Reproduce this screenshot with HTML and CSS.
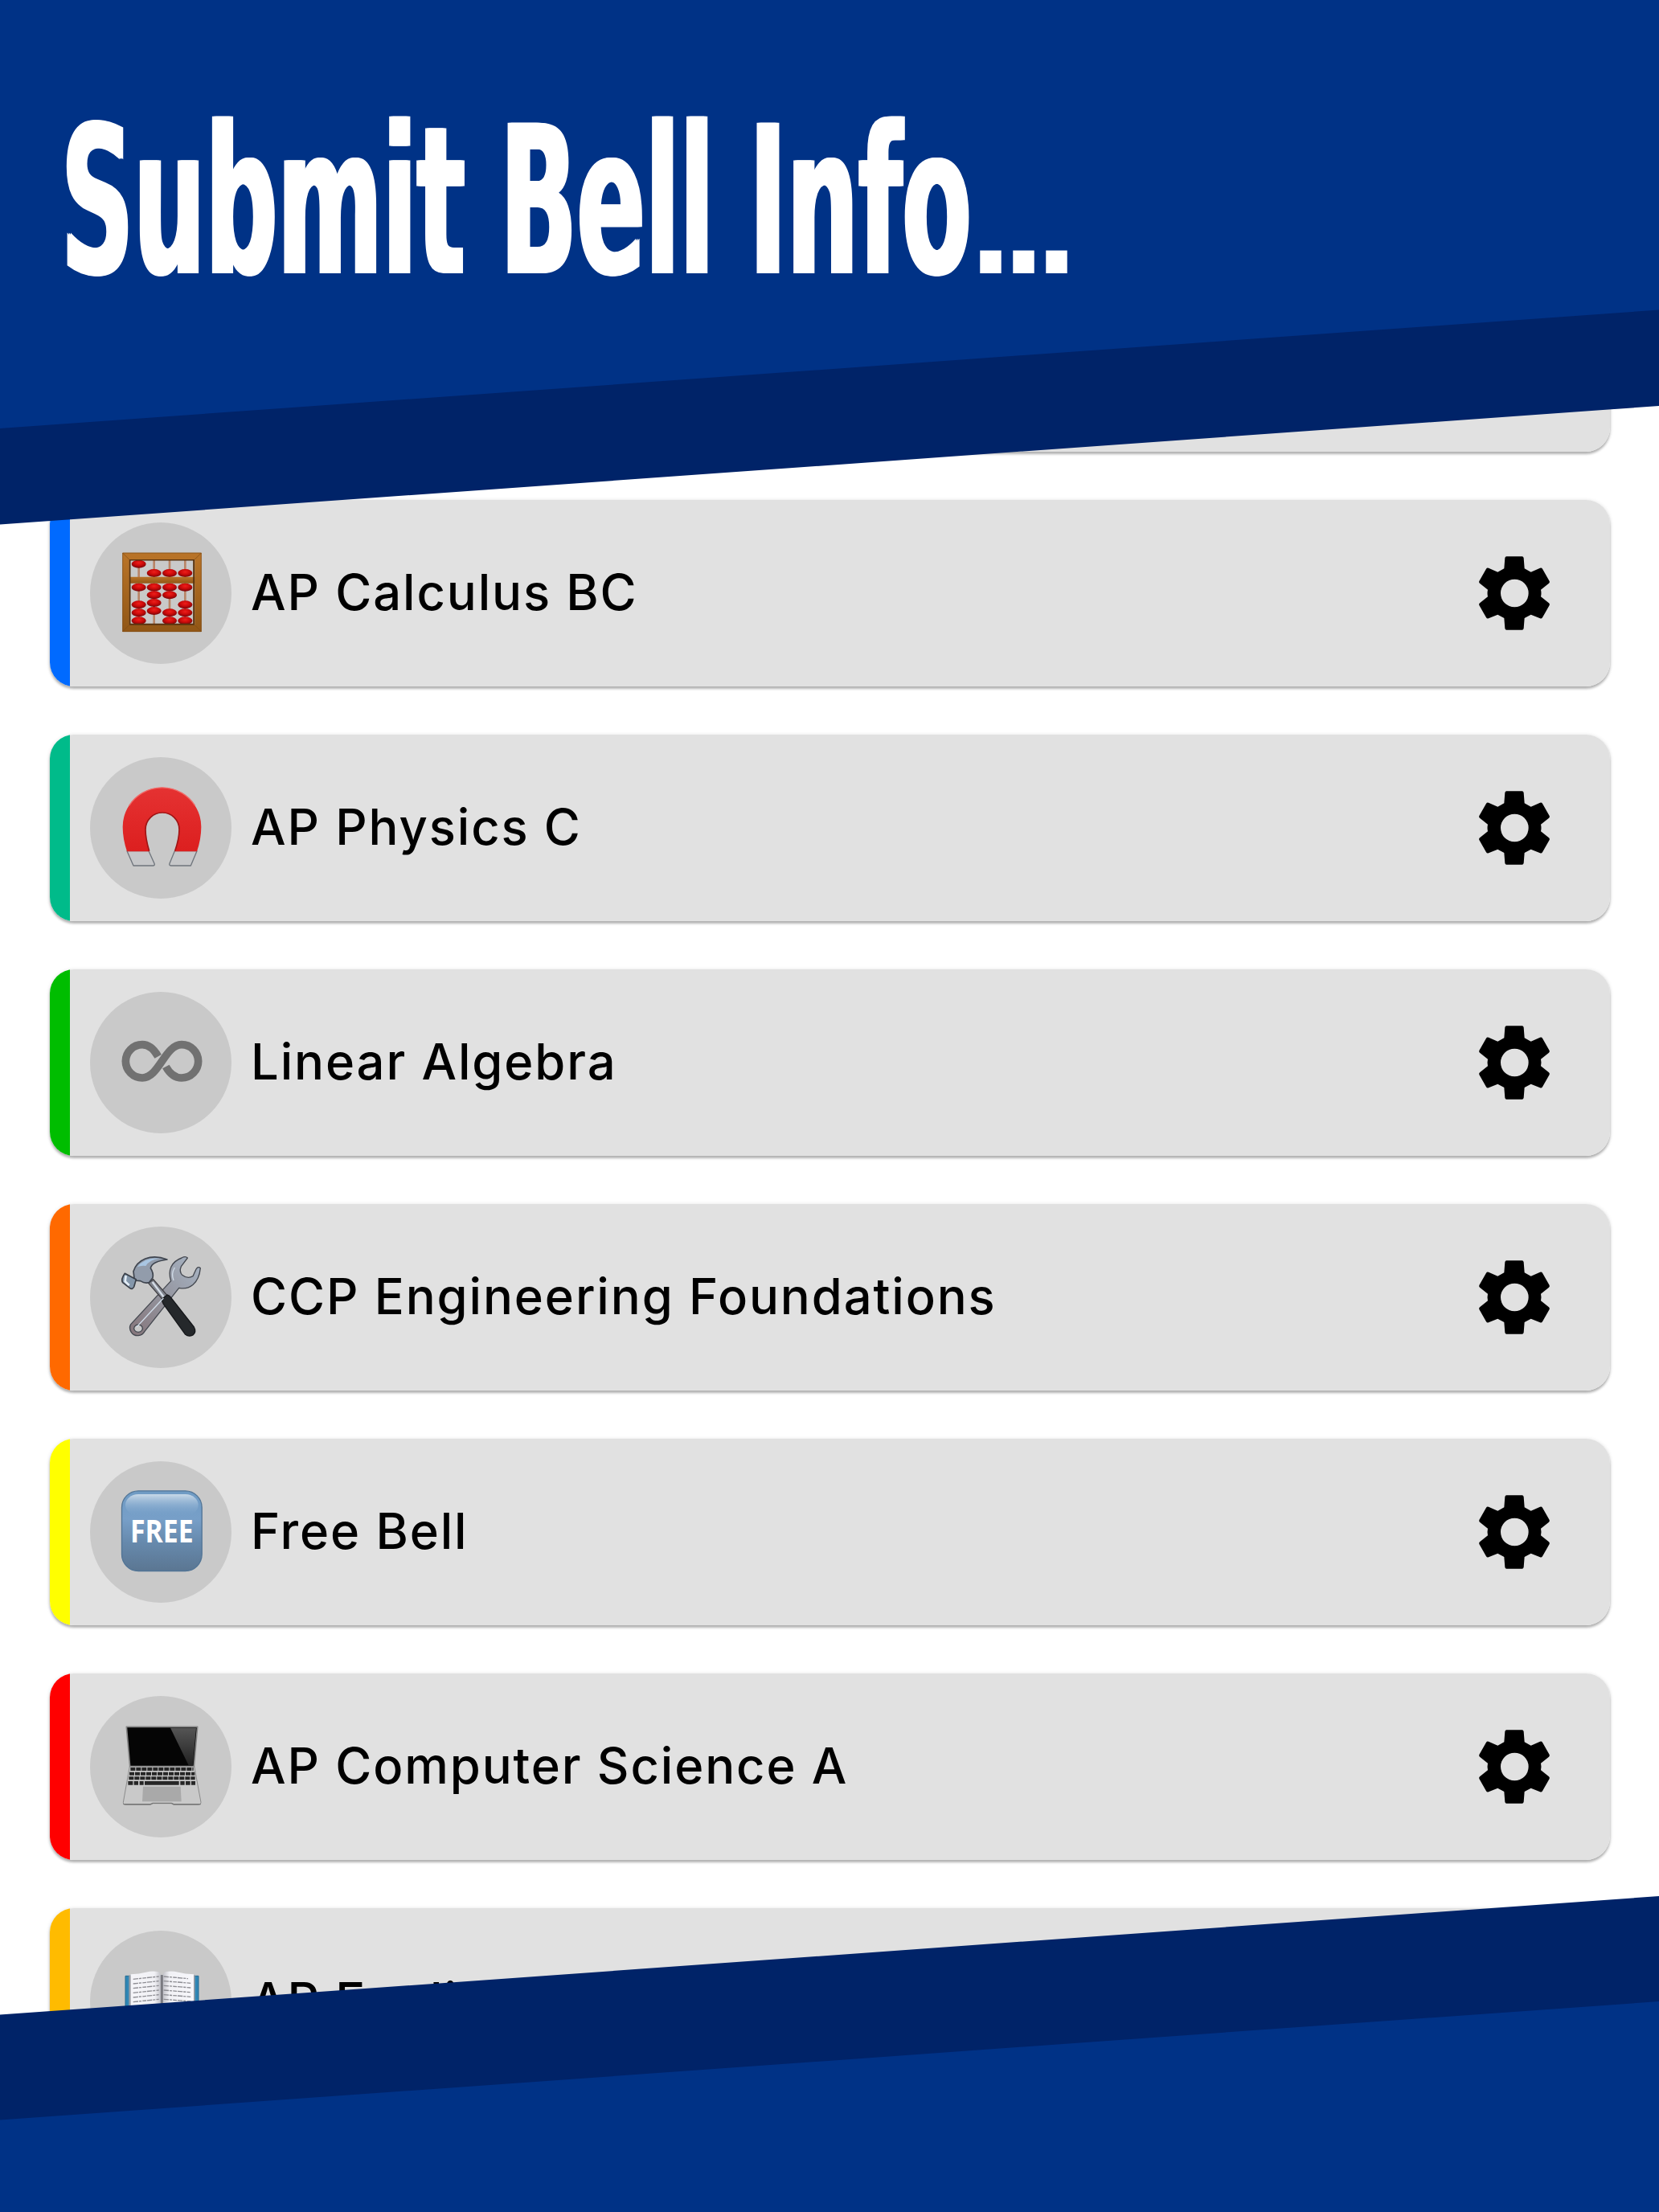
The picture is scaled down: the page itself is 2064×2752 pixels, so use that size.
FILE: index.html
```html
<!DOCTYPE html>
<html lang="en">
<head>
<meta charset="utf-8">
<title>Submit Bell Info</title>
<link rel="stylesheet" href="styles.css">
</head>
<body>
<svg class="defs" width="0" height="0" aria-hidden="true">
  <defs>
    <symbol id="gear" viewBox="0 5 300 300">
      <path fill-rule="evenodd" d="M115 24Q116 18 121 18H179Q184 18 185 24L188 63 212 76 246 61Q252 59 255 64L281 110Q283 115 279 118L249 142Q252 155 249 168L279 192Q283 195 281 200L255 246Q252 251 246 249L212 235 188 248 185 286Q184 292 179 292H121Q116 292 115 286L112 248 88 235 54 249Q48 251 45 246L19 200Q17 195 21 192L51 168Q48 155 51 142L21 118Q17 115 19 110L45 64Q48 59 54 61L88 76 112 63ZM151 103A52 52 0 1 0 151 207A52 52 0 1 0 151 103Z"/>
    </symbol>
    <radialGradient id="bead" cx=".5" cy=".35" r=".65"><stop offset="0" stop-color="#ee1f1b"/><stop offset=".5" stop-color="#cc0a0a"/><stop offset="1" stop-color="#74060a"/></radialGradient>
    <linearGradient id="wood" x2="0" y2="1"><stop offset="0" stop-color="#b87327"/><stop offset="1" stop-color="#925716"/></linearGradient>
    <linearGradient id="red" x2="0" y2="1"><stop offset="0" stop-color="#e53232"/><stop offset="1" stop-color="#dc1f1f"/></linearGradient>
    <linearGradient id="tile" x2="0" y2="1"><stop offset="0" stop-color="#6f9bc4"/><stop offset=".35" stop-color="#779fc8"/><stop offset=".65" stop-color="#6689ac"/><stop offset="1" stop-color="#5b7692"/></linearGradient>
    <linearGradient id="gloss" x2="0" y2="1"><stop offset="0" stop-color="#c9d9e8"/><stop offset="1" stop-color="#7ba3cc" stop-opacity="0"/></linearGradient>
    <linearGradient id="steel" x1="1" y1="0" x2="0" y2="1"><stop offset="0" stop-color="#a9b6c6"/><stop offset=".5" stop-color="#94959f"/><stop offset="1" stop-color="#85757a"/></linearGradient>
    <linearGradient id="glare" x2="0" y2="1"><stop offset="0" stop-color="#555"/><stop offset="1" stop-color="#222"/></linearGradient>
    <linearGradient id="page" x2="1" y2="0"><stop offset="0" stop-color="#f5f5f9"/><stop offset=".8" stop-color="#f1f1f5"/><stop offset="1" stop-color="#c4c4ca"/></linearGradient>
    <linearGradient id="page2" x2="1" y2="0"><stop offset="0" stop-color="#c4c4ca"/><stop offset=".2" stop-color="#f1f1f5"/><stop offset="1" stop-color="#f7f7fb"/></linearGradient>
  </defs>
</svg>

<header class="banner">
  <h1 class="title"><span class="title-words">Submit Bell Info</span><span class="title-dots">...</span></h1>
</header>

<main class="bells">
  <section class="bell"></section>

  <section class="bell blue">
    <div class="badge"><svg viewBox="336 449 528 528">
      <path fill="#b98567" d="M514 588h8v242h-8zM571 588h8v242h-8zM629 588h8v242h-8zM687 588h8v242h-8z"/>
      <g fill="url(#bead)">
        <ellipse cx="518" cy="604" rx="27" ry="15"/><ellipse cx="575" cy="638" rx="27" ry="15"/><ellipse cx="633" cy="638" rx="27" ry="15"/><ellipse cx="691" cy="638" rx="27" ry="15"/>
        <ellipse cx="518" cy="691" rx="27" ry="15"/><ellipse cx="575" cy="691" rx="27" ry="15"/><ellipse cx="633" cy="691" rx="27" ry="15"/><ellipse cx="691" cy="691" rx="27" ry="15"/>
        <ellipse cx="575" cy="720" rx="27" ry="15"/><ellipse cx="633" cy="720" rx="27" ry="15"/><ellipse cx="575" cy="749" rx="27" ry="15"/><ellipse cx="575" cy="779" rx="27" ry="15"/>
        <ellipse cx="518" cy="756" rx="27" ry="15"/><ellipse cx="518" cy="786" rx="27" ry="15"/><ellipse cx="518" cy="816" rx="27" ry="15"/>
        <ellipse cx="633" cy="786" rx="27" ry="15"/><ellipse cx="633" cy="816" rx="27" ry="15"/>
        <ellipse cx="691" cy="756" rx="27" ry="15"/><ellipse cx="691" cy="786" rx="27" ry="15"/><ellipse cx="691" cy="816" rx="27" ry="15"/>
      </g>
      <path fill="url(#wood)" d="M482 652h246v24H482z"/>
      <path fill="none" stroke="#5a3410" stroke-width="7" d="M484 588h240v242H484z"/>
      <path fill="none" stroke="url(#wood)" stroke-width="25" d="M469.500 574.500h270v270h-270z"/>
      <path fill="none" stroke="#7d4a12" stroke-width="2" d="M458 563h293v293H458zM458 563l24 24M751 563l-24 24M458 856l24-24M751 856l-24-24"/>
    </svg></div>
    <h2 class="name">AP Calculus BC</h2>
    <svg class="gear"><use href="#gear"/></svg>
  </section>

  <section class="bell teal">
    <div class="badge"><svg viewBox="216 126 528 528">
      <path fill="#c6c7c9" stroke="#6f757c" stroke-width="4" stroke-linejoin="round" d="M354 476L378 531H452Q459 530 456 523L435 476ZM615 476L592 531H518Q510 530 513 523L532 476Z"/>
      <path fill="url(#red)" d="M354 478Q338 430 338 386A146.500 146.500 0 0 1 631 386Q631 430 615 478H532Q549 430 549 396A63 63 0 0 0 423 396Q423 430 438 478Z"/>
      <path fill="none" stroke="#a01515" stroke-width="5" d="M437 476Q423 430 423 396A63 63 0 0 1 549 396Q549 430 533 476"/>
      <path fill="none" stroke="#f16a68" stroke-width="4" d="M362 307A146 146 0 0 1 608 307"/>
    </svg></div>
    <h2 class="name">AP Physics C</h2>
    <svg class="gear"><use href="#gear"/></svg>
  </section>

  <section class="bell green">
    <div class="badge"><svg viewBox="216 131 528 528">
      <path fill="none" stroke="#717171" stroke-width="29" d="M470 372Q445 328 411 328A62 62 0 0 0 411 452C474 452 495 328 558 328A62 62 0 0 1 558 452Q522 452 499 410"/>
    </svg></div>
    <h2 class="name">Linear Algebra</h2>
    <svg class="gear"><use href="#gear"/></svg>
  </section>

  <section class="bell orange">
    <div class="badge"><svg viewBox="216 137 528 528">
      <path fill="url(#steel)" stroke="#444850" stroke-width="4" stroke-linejoin="round" fill-rule="evenodd" d="M580 254Q572 246 558 254C520 268 505 300 518 340L368 502C358 520 372 545 396 544Q412 542 420 528L548 366C585 374 622 352 628 292Q620 284 612 296L600 322Q580 334 560 318Q548 304 556 286ZM396 503a16 14 0 1 0 .1 0z"/>
      <path fill="#7f838c" stroke="#3f3e42" stroke-width="4" d="M434 348L452 334 504 394 486 408Z"/>
      <path fill="#d4dce6" d="M446 346L452 342 494 398 488 402Z"/>
      <path fill="#25282b" stroke="#15171a" stroke-width="4" stroke-linejoin="round" d="M484 408L504 392Q512 394 518 402L604 512Q614 530 600 542Q584 550 572 540L490 426Q484 416 484 408Z"/>
      <path fill="#929cab" stroke="#3f454f" stroke-width="5" stroke-linejoin="round" d="M378 304C392 262 440 236 504 260C472 264 446 272 442 292Q454 310 450 328L436 346Q420 350 404 340L382 338Z"/>
      <path fill="#a9c6e2" d="M392 288Q420 250 476 256Q438 260 424 284Q404 282 392 288Z"/>
      <path fill="#8497ab" stroke="#3a3f48" stroke-width="5" stroke-linejoin="round" d="M346 312L388 334 380 362Q374 374 364 366L338 346Q330 334 346 312Z"/>
      <path fill="none" stroke="#e4edf6" stroke-width="8" d="M350 320L347 342 362 356"/>
      <path fill="none" stroke="#d0dce8" stroke-width="4" d="M532 290Q518 312 528 338M390 512L490 404"/>
    </svg></div>
    <h2 class="name">CCP Engineering Foundations</h2>
    <svg class="gear"><use href="#gear"/></svg>
  </section>

  <section class="bell yellow">
    <div class="badge"><svg viewBox="216 143 528 528">
      <rect x="334.500" y="253.500" width="299" height="299" rx="62" fill="url(#tile)" stroke="#527596" stroke-width="4"/>
      <rect x="348" y="266" width="272" height="80" rx="48" fill="url(#gloss)"/>
      <text class="free" x="366" y="446" textLength="236" lengthAdjust="spacingAndGlyphs">FREE</text>
    </svg></div>
    <h2 class="name">Free Bell</h2>
    <svg class="gear"><use href="#gear"/></svg>
  </section>

  <section class="bell red">
    <div class="badge"><svg viewBox="216 149 528 528">
      <path fill="#c9c9c9" stroke="#8b8b8b" stroke-width="3" stroke-linejoin="round" d="M364 411H605L630 546Q630 555 622 555H528L520 550H450L442 555H348Q338 555 340 546Z"/>
      <path fill="#050505" stroke="#858585" stroke-width="5" stroke-linejoin="round" d="M352 264H617L604 412H365Z"/>
      <path fill="url(#glare)" d="M516 268H612L600 408H584Z"/>
      <path fill="none" stroke="#262626" stroke-width="12" stroke-dasharray="18 3" d="M367 422H602M363 439H607M361 456H608"/>
      <path fill="none" stroke="#262626" stroke-width="14" d="M358 474H376M380 474H396M401 474H416M420 474H548M553 474H569M573 474H590M594 474H609"/>
      <path fill="#a9a9a9" d="M414 487H554L557 543H411Z"/>
      <path fill="none" stroke="#777" stroke-width="4" d="M341 553H442L450 549H520L528 553H629"/>
    </svg></div>
    <h2 class="name">AP Computer Science A</h2>
    <svg class="gear"><use href="#gear"/></svg>
  </section>

  <section class="bell amber">
    <div class="badge"><svg viewBox="216 153 528 528">
      <path fill="#2f86b5" stroke="#256b92" stroke-width="3" d="M348 322H621V590H348Z"/>
      <path fill="#999ca4" d="M361 320H608V580H361Z"/>
      <path fill="url(#page)" d="M368 316Q400 314 424 308Q464 300 479 312V580H368Z"/>
      <path fill="url(#page2)" d="M603 316Q570 314 546 308Q506 300 489 312V580H603Z"/>
      <path stroke="#77777d" stroke-width="7" d="M484 318V580"/>
      <path fill="none" stroke="#8d8d93" stroke-width="4" stroke-dasharray="19 3 9 4 14 3" d="M377 334L473 324M377 351L473 341M377 368L473 358M377 385L473 375M377 402L473 392M377 419L473 409M491 324L582 332M491 341L592 349M491 358L592 366M491 375L590 383M491 392L592 400M491 409L592 417"/>
    </svg></div>
    <h2 class="name">AP English</h2>
    <svg class="gear"><use href="#gear"/></svg>
  </section>
</main>

<footer class="banner-bottom"></footer>
</body>
</html>
```
FILE: styles.css
```css
* { box-sizing: border-box; }

body {
  position: relative;
  width: 2064px;
  height: 2752px;
  margin: 0;
  overflow: hidden;
  background: #fff;
  font-family: Inter, "Liberation Sans", sans-serif;
}

.defs { position: absolute; }

/* Slanted banners lie over the scrolled list */
.banner,
.banner-bottom {
  position: absolute;
  left: 0;
  width: 100%;
  z-index: 1;
  background: #002368;
}

.banner {
  top: 0;
  height: 653px;
  padding: 123px 0 0 76px;
  clip-path: polygon(0 0, 100% 0, 100% 505px, 0 652.5px);
}

.banner::before,
.banner-bottom::before {
  content: "";
  position: absolute;
  inset: 0;
  background: #003286;
}

.banner::before { clip-path: polygon(0 0, 100% 0, 100% 385.5px, 0 533px); }

.banner-bottom {
  top: 2359px;
  height: 393px;
  clip-path: polygon(0 147.5px, 100% 0, 100% 100%, 0 100%);
}

.banner-bottom::before { clip-path: polygon(0 278.5px, 100% 131px, 100% 100%, 0 100%); }

.title {
  position: relative;
  display: flex;
  align-items: baseline;
  margin: 0;
  color: #fff;
  font: 700 257px/1 "DejaVu Sans Condensed", "DejaVu Sans", sans-serif;
  white-space: nowrap;
}

.title-words {
  width: 1128px;
  transform: scaleX(.542);
  transform-origin: 0 0;
  text-shadow: 4px 0 #fff, -4px 0 #fff;
}

.title-dots {
  font: 700 150px/1 "DejaVu Sans", sans-serif;
  letter-spacing: -16px;
}

.bells {
  display: flex;
  flex-direction: column;
  gap: 60px;
  padding: 330px 61px 0 62px;
}

.bell {
  --stripe: #e1e1e1;
  display: flex;
  flex: none;
  align-items: center;
  height: 232px;
  padding: 0 69px 0 50px;
  border-radius: 30px;
  background: linear-gradient(90deg, var(--stripe) 25px, #e1e1e1 25px);
  box-shadow: 0 3px 3px rgba(0, 0, 0, .24), 0 1px 5px rgba(0, 0, 0, .16);
}

.blue { --stripe: #006aff; }
.teal { --stripe: #00bb8a; }
.green { --stripe: #00bd00; }
.orange { --stripe: #ff6900; }
.yellow { --stripe: #ffff00; }
.red { --stripe: #ff0000; }
.amber { --stripe: #ffbb00; }

.badge {
  flex: none;
  width: 176px;
  height: 176px;
  border-radius: 50%;
  background: #c9c9c9;
}

.badge svg {
  display: block;
  width: 176px;
  height: 176px;
}

.free {
  fill: #fff;
  font: 700 118px "Open Sans", sans-serif;
}

.name {
  flex: 1;
  margin: 0 0 2px 24px;
  color: #000;
  font-size: 61.5px;
  font-weight: 550;
  line-height: 1.2;
  letter-spacing: 1.9px;
  white-space: nowrap;
}

.gear {
  flex: none;
  width: 100px;
  height: 100px;
}
```
